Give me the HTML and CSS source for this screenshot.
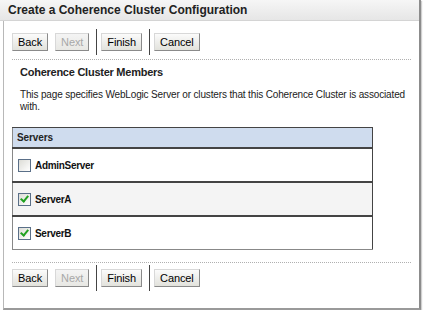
FILE: index.html
```html
<!DOCTYPE html>
<html lang="en">
<head>
  <meta charset="UTF-8" />
  <title>Create a Coherence Cluster Configuration</title>
  <link rel="stylesheet" href="styles.css">
</head>
<body>
  <div class="window">
    <div class="title-bar">Create a Coherence Cluster Configuration</div>

    <div class="content">
      <!-- Top wizard buttons -->
      <div class="train">
        <button class="btn">Back</button>
        <button class="btn" disabled>Next</button>
        <span class="sep"></span>
        <button class="btn">Finish</button>
        <span class="sep"></span>
        <button class="btn">Cancel</button>
      </div>

      <div class="section">
        <h3>Coherence Cluster Members</h3>
        <p>This page specifies WebLogic Server or clusters that this Coherence Cluster is associated with.</p>

        <table class="servers">
          <thead>
            <tr><th>Servers</th></tr>
          </thead>
          <tbody>
            <tr><td><label><span class="box"></span>AdminServer</label></td></tr>
            <tr class="alt"><td><label><span class="box checked"></span>ServerA</label></td></tr>
            <tr><td><label><span class="box checked"></span>ServerB</label></td></tr>
          </tbody>
        </table>
      </div>

      <!-- Bottom wizard buttons -->
      <div class="train bottom">
        <button class="btn">Back</button>
        <button class="btn" disabled>Next</button>
        <span class="sep"></span>
        <button class="btn">Finish</button>
        <span class="sep"></span>
        <button class="btn">Cancel</button>
      </div>
    </div>
  </div>
</body>
</html>
```

FILE: styles.css
```css
body {
  margin: 0;
  background: #ffffff;
  font-family: "Liberation Sans", Arial, sans-serif;
  font-size: 11px;
  color: #000;
}

.window {
  width: 418px;
  height: 310px;
  margin-left: 3px;
  border-left: 1px solid #b8b8b8;
  border-right: 2px solid #8c8c8c;
  border-bottom: 2px solid #9a9a9a;
  box-shadow: 1px 1px 1px #d0d0d0;
  box-sizing: border-box;
  background: #fff;
}

.title-bar {
  height: 21px;
  margin-left: -4px;
  padding-left: 8px;
  line-height: 20px;
  font-size: 12px;
  font-weight: bold;
  color: #222;
  background: linear-gradient(#f6f6f6, #e6e6e6);
  border-bottom: 1px solid #d4d4d4;
  box-sizing: border-box;
}

.content {
  padding: 0 8px 0 8px;
}

.train {
  display: flex;
  align-items: center;
  height: 39px;
  padding-top: 4px;
  border-bottom: 1px dotted #b0b0b0;
  box-sizing: border-box;
}

.train.bottom {
  border-bottom: none;
  border-top: 1px dotted #b0b0b0;
  margin-top: 12px;
  padding-top: 0;
  height: 30px;
}

.btn {
  font-family: "Liberation Sans", Arial, sans-serif;
  font-size: 11px;
  letter-spacing: -0.1px;
  height: 18px;
  padding: 0 5px;
  margin-right: 7px;
  background: linear-gradient(#fbfbfb, #e2e2dc);
  border: 1px solid;
  border-color: #d8d8d8 #8a8a8a #8a8a8a #d8d8d8;
  color: #000;
  line-height: 16px;
}

.btn:disabled {
  color: #a8a8a8;
  background: linear-gradient(#f4f4f4, #e8e8e4);
}

.sep {
  width: 1px;
  height: 26px;
  background: #444;
  margin-right: 4px;
}

.section h3 {
  margin: 6px 0 0 8px;
  font-size: 11px;
  letter-spacing: -0.25px;
  font-weight: bold;
  color: #222;
}

.section p {
  margin: 11px 0 0 8px;
  line-height: 12px;
  font-size: 10px;
  letter-spacing: -0.15px;
  color: #222;
}

.servers {
  margin-top: 14px;
  width: 361px;
  border-collapse: collapse;
  border: 1px solid #444;
  border-left-color: #888;
}

.servers th {
  height: 19px;
  padding: 0 0 0 4px;
  text-align: left;
  font-size: 10px;
  letter-spacing: -0.1px;
  font-weight: bold;
  background: #cfdcee;
  border-bottom: 2px solid #444;
  color: #222;
}

.servers td {
  height: 32px;
  padding: 0 0 0 5px;
  border-bottom: 2px solid #444;
  font-size: 10px;
  letter-spacing: -0.3px;
  font-weight: bold;
  color: #111;
}

.servers tr:last-child td {
  border-bottom: 1px solid #888;
}

.servers tr.alt td {
  background: #f4f4f4;
}

.servers label {
  display: flex;
  align-items: center;
  gap: 4px;
}

.box {
  width: 11px;
  height: 11px;
  border: 1px solid #5a6f88;
  background: linear-gradient(135deg, #dcdcd6, #ffffff);
  position: relative;
}

.box.checked::after {
  content: "";
  position: absolute;
  left: 3px;
  top: 0px;
  width: 3px;
  height: 6px;
  border: solid #21a121;
  border-width: 0 2px 2px 0;
  transform: rotate(40deg);
}
```
